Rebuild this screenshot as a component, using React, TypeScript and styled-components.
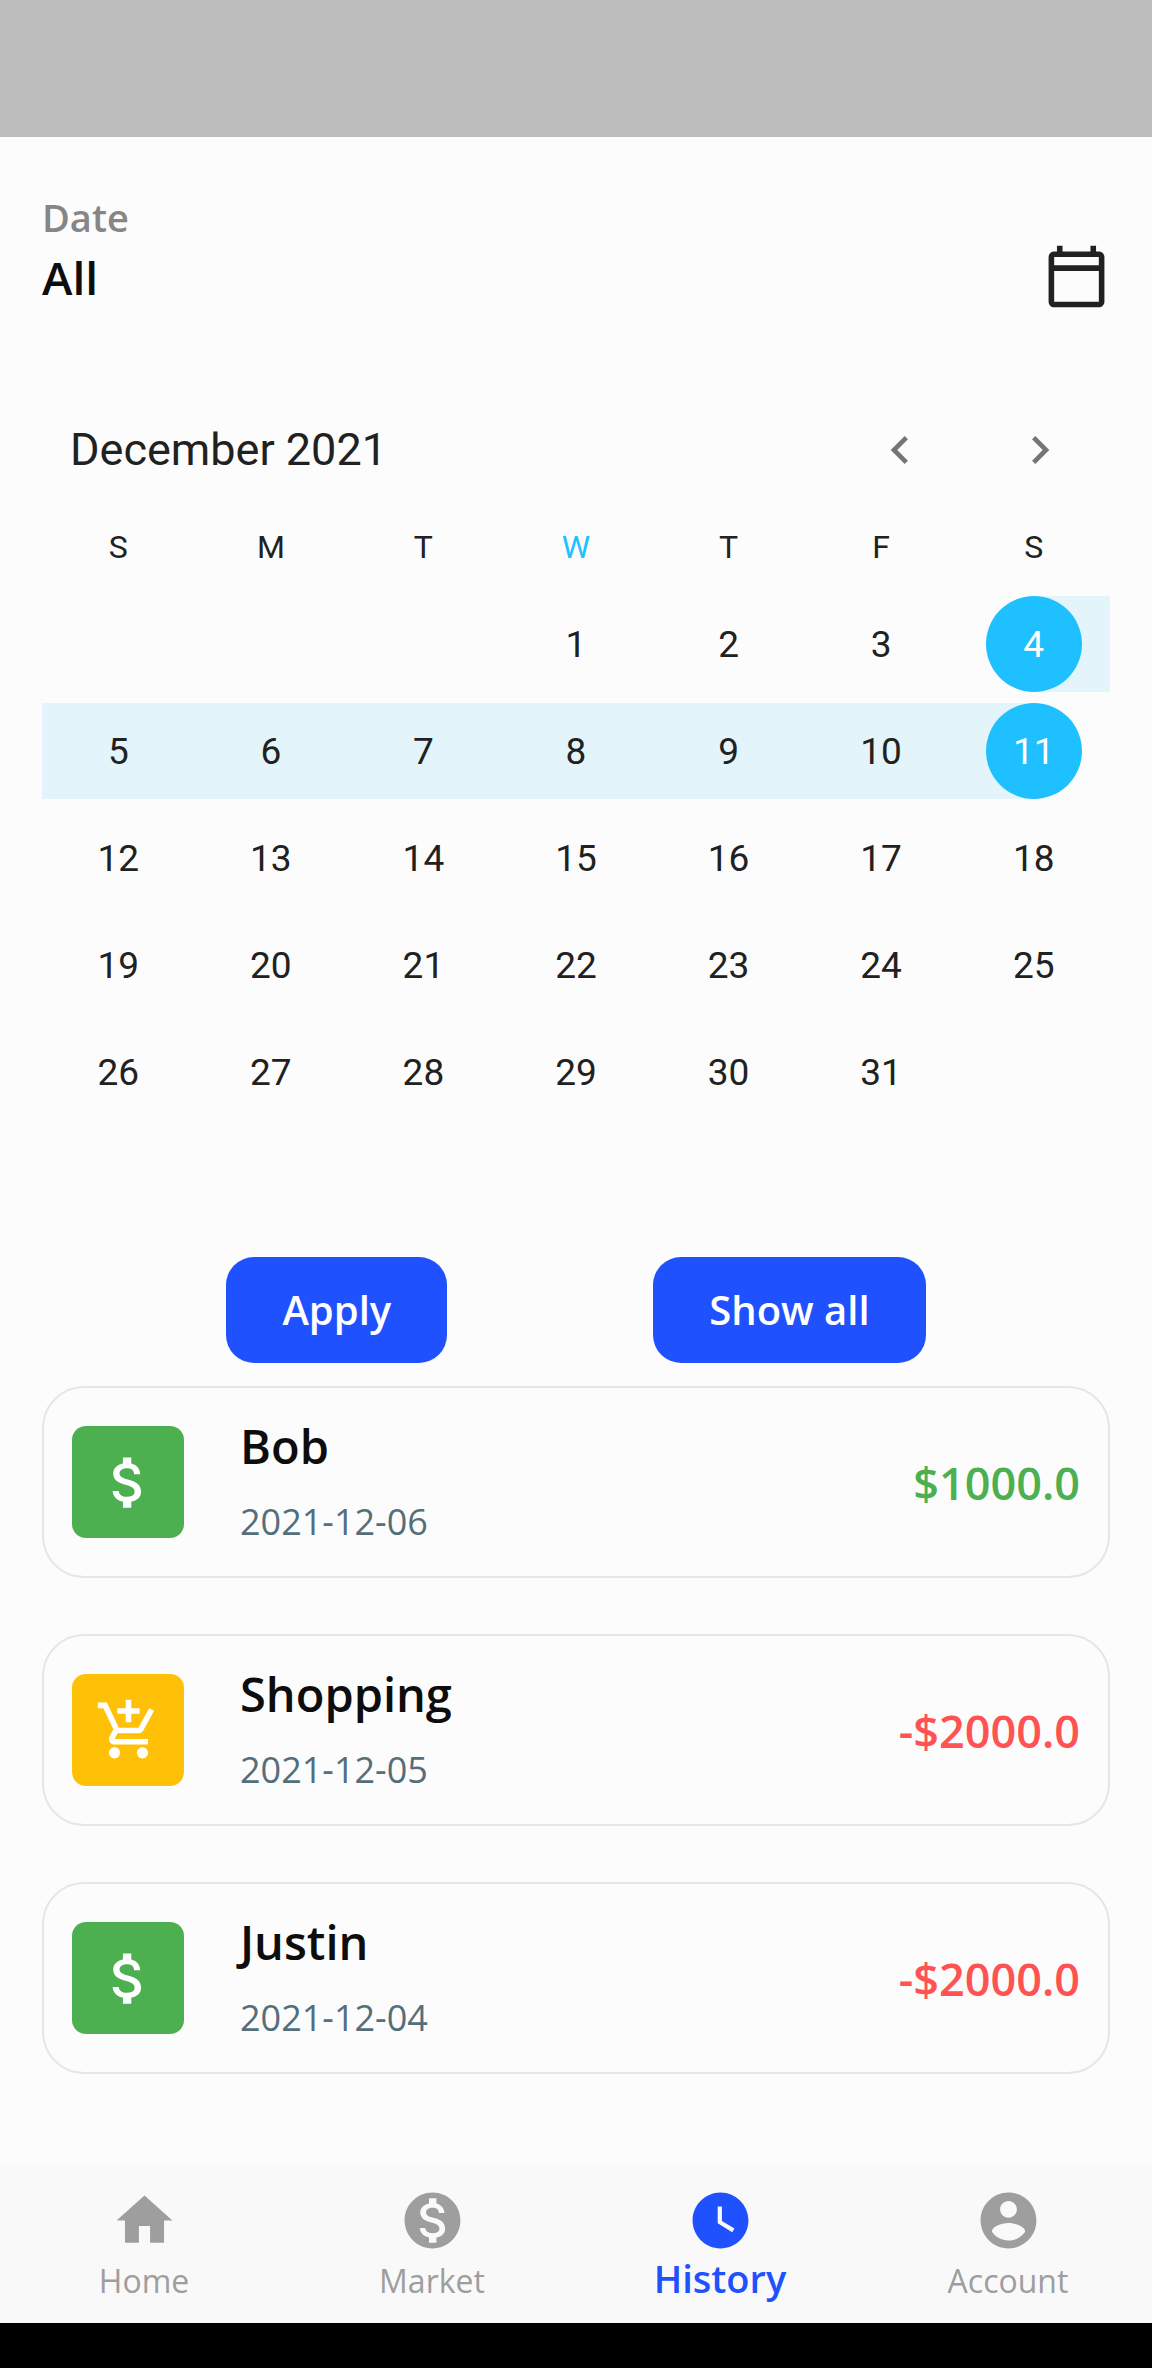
import React from "react";
import styled, { createGlobalStyle } from "styled-components";

const colors = {
  page: "#fcfcfc",
  ink: "#0d0d0d",
  text: "#212121",
  muted: "#868686",
  blue: "#1f51ff",
  sky: "#1fc0ff",
  range: "#e3f4fb",
  green: "#4caf50",
  amber: "#ffc107",
  red: "#ff5252",
  slate: "#546e7a",
  line: "#e6e6e6",
  inactive: "#9e9e9e",
};

const body = `"Open Sans", "Noto Sans", sans-serif`;
const numeric = `Roboto, "Liberation Sans", sans-serif`;

const GlobalStyle = createGlobalStyle`
  *, *::before, *::after { box-sizing: border-box; }
  body { margin: 0; background: ${colors.page}; font-family: ${body}; }
  button { border: 0; padding: 0; background: none; font: inherit; color: inherit; cursor: pointer; }
  h1, h2, h3, p, ul { margin: 0; padding: 0; font-weight: inherit; }
  ul { list-style: none; }
`;

const Screen = styled.div`
  min-height: 100vh;
  display: flex;
  flex-direction: column;
  background: ${colors.page};
`;

const StatusBar = styled.div`
  height: 137px;
  background: #bcbcbc;
`;

const SystemBar = styled.div`
  height: 45px;
  background: #000;
`;

const Content = styled.main`
  flex: 1;
  display: flex;
  flex-direction: column;
  padding: 52px 42px 56px;
`;

const Header = styled.header`
  display: flex;
  justify-content: space-between;
  align-items: flex-end;
  margin-bottom: 92px;
`;

const Caption = styled.p`
  font-size: 38px;
  font-weight: 600;
  line-height: 56px;
  color: ${colors.muted};
`;

const Heading = styled.h1`
  font-size: 46px;
  font-weight: 600;
  line-height: 65px;
  color: ${colors.ink};
`;

const IconButton = styled.button`
  display: flex;
  color: ${colors.text};
`;

const Glyph = styled.svg<{ $size?: number }>`
  display: block;
  width: ${(p) => p.$size ?? 67}px;
  height: ${(p) => p.$size ?? 67}px;
  fill: currentColor;
`;

const MonthBar = styled.div`
  display: flex;
  align-items: center;
  height: 96px;
  padding-left: 28px;
  font-family: ${numeric};
`;

const MonthTitle = styled.h2`
  flex: 1;
  font-size: 45px;
  line-height: 56px;
  color: ${colors.text};
`;

const MonthStep = styled.button`
  width: 140px;
  height: 96px;
  display: flex;
  align-items: center;
  justify-content: center;
  color: #757575;
`;

const MonthGrid = styled.table`
  width: 100%;
  table-layout: fixed;
  border-collapse: separate;
  border-spacing: 0 11px;
  font-family: ${numeric};
  color: ${colors.text};
`;

const Weekday = styled.th<{ $today: boolean }>`
  height: 76px;
  padding: 0;
  font-size: 32px;
  font-weight: 400;
  color: ${(p) => (p.$today ? colors.sky : colors.text)};
`;

type Span = "none" | "start" | "middle" | "end";

const spanBackground: Record<Span, string> = {
  none: "none",
  start: `linear-gradient(to right, transparent 50%, ${colors.range} 50%)`,
  middle: `linear-gradient(${colors.range}, ${colors.range})`,
  end: `linear-gradient(to right, ${colors.range} 50%, transparent 50%)`,
};

const DayCell = styled.td<{ $span: Span }>`
  height: 96px;
  padding: 0;
  background: ${(p) => spanBackground[p.$span]};
`;

const DayButton = styled.button<{ $selected: boolean }>`
  display: block;
  width: 96px;
  height: 96px;
  margin: 0 auto;
  border-radius: 50%;
  font-size: 37px;
  text-align: center;
  background: ${(p) => (p.$selected ? colors.sky : "transparent")};
  color: ${(p) => (p.$selected ? "#fff" : colors.text)};
`;

const Actions = styled.div`
  display: flex;
  justify-content: center;
  gap: 206px;
  margin: 126px 0 23px;
`;

const ActionButton = styled.button`
  height: 106px;
  padding: 0 56px 2px;
  border-radius: 28px;
  background: ${colors.blue};
  color: #fff;
  font-size: 40px;
  font-weight: 600;
`;

const Transactions = styled.ul`
  display: flex;
  flex-direction: column;
  gap: 56px;
`;

const Transaction = styled.li`
  display: flex;
  align-items: center;
  gap: 56px;
  height: 192px;
  padding: 0 28px;
  border: 2px solid ${colors.line};
  border-radius: 42px;
`;

const Tile = styled.div<{ $color: string }>`
  display: flex;
  align-items: center;
  justify-content: center;
  width: 112px;
  height: 112px;
  border-radius: 14px;
  background: ${(p) => p.$color};
  color: #fff;
`;

const Details = styled.div`
  flex: 1;
  padding-top: 4px;
`;

const Name = styled.h3`
  font-size: 47px;
  font-weight: 600;
  line-height: 75px;
  color: ${colors.ink};
`;

const When = styled.p`
  font-size: 36px;
  line-height: 75px;
  color: ${colors.slate};
`;

const Amount = styled.p<{ $color: string }>`
  font-size: 45px;
  font-weight: 600;
  color: ${(p) => p.$color};
`;

const TabBar = styled.nav`
  display: flex;
  height: 160px;
  padding-top: 24px;
  background: #f9f9f9;
`;

const Tab = styled.a<{ $active: boolean }>`
  flex: 1;
  display: flex;
  flex-direction: column;
  align-items: center;
  text-decoration: none;
  line-height: ${(p) => (p.$active ? 49 : 54)}px;
  font-size: ${(p) => (p.$active ? 38 : 32)}px;
  font-weight: ${(p) => (p.$active ? 600 : 400)};
  color: ${(p) => (p.$active ? colors.blue : colors.inactive)};
`;

const paths = {
  calendar:
    "M20 3h-1V1h-2v2H7V1H5v2H4c-1.1 0-2 .9-2 2v16c0 1.1.9 2 2 2h16c1.1 0 2-.9 2-2V5c0-1.1-.9-2-2-2zm0 18H4V10h16V21zm0-13H4V5h16v3z",
  left: "M15.41 7.41L14 6l-6 6 6 6 1.41-1.41L10.83 12z",
  right: "M10 6L8.59 7.41 13.17 12l-4.58 4.59L10 18l6-6z",
  money:
    "M11.8 10.9c-2.27-.59-3-1.2-3-2.15 0-1.09 1.01-1.85 2.7-1.85 1.78 0 2.44.85 2.5 2.1h2.21c-.07-1.72-1.12-3.3-3.21-3.81V3h-3v2.16c-1.94.42-3.5 1.68-3.5 3.61 0 2.31 1.91 3.46 4.7 4.13 2.5.6 3 1.48 3 2.41 0 .69-.49 1.79-2.7 1.79-2.06 0-2.87-.92-2.98-2.1h-2.2c.12 2.19 1.76 3.42 3.68 3.83V21h3v-2.15c1.95-.37 3.5-1.5 3.5-3.55 0-2.84-2.43-3.81-4.7-4.4z",
  cart: "M11 9h2V6h3V4h-3V1h-2v3H8v2h3v3zm-4 9c-1.1 0-1.99.9-1.99 2S5.9 22 7 22s2-.9 2-2-.9-2-2-2zm10 0c-1.1 0-1.99.9-1.99 2s.89 2 1.99 2 2-.9 2-2-.9-2-2-2zm-9.83-3.25l.03-.12.9-1.63h7.45c.75 0 1.41-.41 1.75-1.03l3.86-7.01L19.42 4h-.01l-1.1 2-2.76 5H8.53l-.13-.27L6.16 6l-.95-2-.94-2H1v2h2l3.6 7.59-1.35 2.45c-.16.28-.25.61-.25.96 0 1.1.9 2 2 2h12v-2H7.42c-.13 0-.25-.11-.25-.25z",
  home: "M10 20v-6h4v6h5v-8h3L12 3 2 12h3v8z",
  market:
    "M12 2C6.48 2 2 6.48 2 12s4.48 10 10 10 10-4.48 10-10S17.52 2 12 2zm1.41 16.09V20h-2.67v-1.93c-1.71-.36-3.16-1.46-3.27-3.4h1.96c.1 1.05.82 1.87 2.65 1.87 1.96 0 2.4-.98 2.4-1.59 0-.83-.44-1.61-2.67-2.14-2.48-.6-4.18-1.62-4.18-3.67 0-1.72 1.39-2.84 3.11-3.21V4h2.67v1.95c1.86.45 2.79 1.86 2.85 3.39H14.3c-.05-1.11-.64-1.87-2.22-1.87-1.5 0-2.4.68-2.4 1.64 0 .84.65 1.39 2.67 1.91s4.18 1.39 4.18 3.91c-.01 1.83-1.38 2.83-3.12 3.16z",
  history:
    "M12 2C6.5 2 2 6.5 2 12s4.5 10 10 10 10-4.5 10-10S17.5 2 12 2zm4.2 14.2L11 13V7h1.5v5.2l4.5 2.7-.8 1.3z",
  account:
    "M12 2C6.48 2 2 6.48 2 12s4.48 10 10 10 10-4.48 10-10S17.52 2 12 2zm0 3c1.66 0 3 1.34 3 3s-1.34 3-3 3-3-1.34-3-3 1.34-3 3-3zm0 14.2c-2.5 0-4.71-1.28-6-3.22.03-1.99 4-3.08 6-3.08 1.99 0 5.97 1.09 6 3.08-1.29 1.94-3.5 3.22-6 3.22z",
};

type IconName = keyof typeof paths;

function Icon({ name, size }: { name: IconName; size?: number }) {
  return (
    <Glyph viewBox="0 0 24 24" $size={size} aria-hidden="true">
      <path d={paths[name]} />
    </Glyph>
  );
}

const weekdays = [
  ["Sunday", "S"],
  ["Monday", "M"],
  ["Tuesday", "T"],
  ["Wednesday", "W"],
  ["Thursday", "T"],
  ["Friday", "F"],
  ["Saturday", "S"],
];
const today = "Wednesday";
const firstWeekday = 3;
const daysInMonth = 31;
const rangeStart = 4;
const rangeEnd = 11;

const weeks = Array.from({ length: 5 }, (_, w) =>
  Array.from({ length: 7 }, (_, d) => {
    const day = w * 7 + d - firstWeekday + 1;
    return day >= 1 && day <= daysInMonth ? day : null;
  })
);

function spanOf(day: number | null): Span {
  if (day === null || day < rangeStart || day > rangeEnd) return "none";
  if (day === rangeStart) return "start";
  if (day === rangeEnd) return "end";
  return "middle";
}

const transactions: { name: string; date: string; amount: string; icon: IconName; tile: string; tone: string }[] = [
  { name: "Bob", date: "2021-12-06", amount: "$1000.0", icon: "money", tile: colors.green, tone: colors.green },
  { name: "Shopping", date: "2021-12-05", amount: "-$2000.0", icon: "cart", tile: colors.amber, tone: colors.red },
  { name: "Justin", date: "2021-12-04", amount: "-$2000.0", icon: "money", tile: colors.green, tone: colors.red },
];

const tabs: { label: string; icon: IconName }[] = [
  { label: "Home", icon: "home" },
  { label: "Market", icon: "market" },
  { label: "History", icon: "history" },
  { label: "Account", icon: "account" },
];
const activeTab = "History";

function Calendar() {
  return (
    <section>
      <MonthBar>
        <MonthTitle>December 2021</MonthTitle>
        <MonthStep type="button" aria-label="Previous month">
          <Icon name="left" size={56} />
        </MonthStep>
        <MonthStep type="button" aria-label="Next month">
          <Icon name="right" size={56} />
        </MonthStep>
      </MonthBar>
      <MonthGrid>
        <thead>
          <tr>
            {weekdays.map(([name, initial]) => (
              <Weekday key={name} scope="col" abbr={name} $today={name === today}>
                {initial}
              </Weekday>
            ))}
          </tr>
        </thead>
        <tbody>
          {weeks.map((week, w) => (
            <tr key={w}>
              {week.map((day, d) => (
                <DayCell key={d} $span={spanOf(day)}>
                  {day !== null && (
                    <DayButton type="button" $selected={day === rangeStart || day === rangeEnd}>
                      {day}
                    </DayButton>
                  )}
                </DayCell>
              ))}
            </tr>
          ))}
        </tbody>
      </MonthGrid>
    </section>
  );
}

export default function App() {
  return (
    <Screen>
      <GlobalStyle />
      <StatusBar />
      <Content>
        <Header>
          <div>
            <Caption>Date</Caption>
            <Heading>All</Heading>
          </div>
          <IconButton type="button" aria-label="Choose dates">
            <Icon name="calendar" />
          </IconButton>
        </Header>
        <Calendar />
        <Actions>
          <ActionButton type="button">Apply</ActionButton>
          <ActionButton type="button">Show all</ActionButton>
        </Actions>
        <Transactions>
          {transactions.map((t) => (
            <Transaction key={t.name}>
              <Tile $color={t.tile}>
                <Icon name={t.icon} />
              </Tile>
              <Details>
                <Name>{t.name}</Name>
                <When>{t.date}</When>
              </Details>
              <Amount $color={t.tone}>{t.amount}</Amount>
            </Transaction>
          ))}
        </Transactions>
      </Content>
      <TabBar>
        {tabs.map((t) => (
          <Tab key={t.label} href={`#${t.label.toLowerCase()}`} $active={t.label === activeTab}>
            <Icon name={t.icon} />
            {t.label}
          </Tab>
        ))}
      </TabBar>
      <SystemBar />
    </Screen>
  );
}
